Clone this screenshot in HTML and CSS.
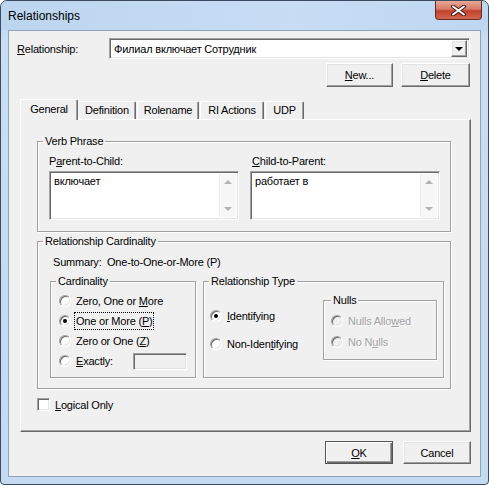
FILE: index.html
```html
<!DOCTYPE html>
<html lang="en">
<head>
    <meta charset="UTF-8">
    <title>Relationships</title>
    <link rel="stylesheet" href="styles.css">
</head>
<body>

<div class="window">
    <!-- Title bar -->
    <div class="titlebar">
        <span class="title">Relationships</span>
        <div class="close">
            <svg width="17" height="11" viewBox="0 0 17 11">
                <path d="M3 1.5 L14 9.5 M14 1.5 L3 9.5" stroke="#4a1a12" stroke-width="4" stroke-linecap="round"/>
                <path d="M3 1.5 L14 9.5 M14 1.5 L3 9.5" stroke="#fff" stroke-width="2" stroke-linecap="round"/>
            </svg>
        </div>
    </div>

    <div class="client">
        <div class="rel-row">
            <label class="rel-label"><u>R</u>elationship:</label>
            <div class="combo sunken">
                <span class="combo-text">Филиал включает Сотрудник</span>
                <span class="combo-drop raised"><i class="arrow-down"></i></span>
            </div>
        </div>

        <div class="btn-row top-buttons">
            <button class="btn btn-new"><u>N</u>ew...</button>
            <button class="btn btn-delete"><u>D</u>elete</button>
        </div>

        <!-- Tabs -->
        <div class="tabs">
            <div class="tab active">General</div>
            <div class="tab tab-def">Definition</div>
            <div class="tab tab-role">Rolename</div>
            <div class="tab tab-ri">RI Actions</div>
            <div class="tab tab-udp">UDP</div>
        </div>

        <div class="panel">
            <fieldset class="group verb-group">
                <legend>Verb Phrase</legend>
                <div class="verb-cols">
                    <div class="verb-col">
                        <div class="field-label">P<u>a</u>rent-to-Child:</div>
                        <div class="memo sunken">
                            <span class="memo-text">включает</span>
                            <span class="scroll"><i class="s-up"></i><i class="s-down"></i></span>
                        </div>
                    </div>
                    <div class="verb-col">
                        <div class="field-label right-label"><u>C</u>hild-to-Parent:</div>
                        <div class="memo sunken">
                            <span class="memo-text">работает в</span>
                            <span class="scroll"><i class="s-up"></i><i class="s-down"></i></span>
                        </div>
                    </div>
                </div>
            </fieldset>

            <fieldset class="group card-group">
                <legend>Relationship Cardinality</legend>
                <div class="summary">
                    <span class="summary-key">Summary:</span>
                    <span>One-to-One-or-More (P)</span>
                </div>
                <div class="card-cols">
                    <fieldset class="group cardinality">
                        <legend>Cardinality</legend>
                        <div class="radio-row"><span class="radio"></span><span class="radio-label">Zero, One or <u>M</u>ore</span></div>
                        <div class="radio-row"><span class="radio checked"></span><span class="radio-label focus">One or More (<u>P</u>)</span></div>
                        <div class="radio-row"><span class="radio"></span><span class="radio-label">Zero or One (<u>Z</u>)</span></div>
                        <div class="radio-row"><span class="radio"></span><span class="radio-label exact-label"><u>E</u>xactly:</span><span class="exact sunken"></span></div>
                    </fieldset>

                    <fieldset class="group rel-type">
                        <legend>Relationship Type</legend>
                        <div class="type-cols">
                            <div class="type-radios">
                                <div class="radio-row type-row"><span class="radio checked"></span><span class="radio-label"><u>I</u>dentifying</span></div>
                                <div class="radio-row type-row"><span class="radio"></span><span class="radio-label">Non-Iden<u>t</u>ifying</span></div>
                            </div>
                            <fieldset class="group nulls">
                                <legend>Nulls</legend>
                                <div class="radio-row null-row"><span class="radio disabled"></span><span class="radio-label disabled-text">Nulls Allo<u>w</u>ed</span></div>
                                <div class="radio-row null-row"><span class="radio disabled"></span><span class="radio-label disabled-text">No N<u>u</u>lls</span></div>
                            </fieldset>
                        </div>
                    </fieldset>
                </div>
            </fieldset>

            <div class="check-row">
                <span class="checkbox sunken"></span>
                <span class="check-label"><u>L</u>ogical Only</span>
            </div>
        </div>

        <div class="btn-row bottom-buttons">
            <button class="btn btn-ok default"><u>O</u>K</button>
            <button class="btn btn-cancel">Cancel</button>
        </div>
    </div>
</div>

</body>
</html>
```

FILE: styles.css
```css
* {
    box-sizing: border-box;
}
body {
    margin: 0;
    width: 489px;
    height: 485px;
    overflow: hidden;
    font-family: "Liberation Sans", Arial, sans-serif;
    font-size: 11px;
    letter-spacing: -0.2px;
    color: #000;
    background: #fff;
}
u {
    text-decoration: underline;
    text-underline-offset: 1px;
}

/* Window frame */
.window {
    width: 489px;
    height: 485px;
    border: 1px solid #3b4a5e;
    border-radius: 7px 7px 4px 4px;
    background: linear-gradient(to bottom, #bcd5ef 0, #c9ddf3 40px, #c4daf2 100%);
    display: flex;
    flex-direction: column;
}
.titlebar {
    height: 29px;
    display: flex;
    align-items: flex-start;
    justify-content: space-between;
    padding-left: 7px;
    background: linear-gradient(to right, #bcd5ef 0, #c8ddf4 60%, #bed7f1 100%);
    border-radius: 7px 7px 0 0;
}
.title {
    font-size: 12px;
    letter-spacing: 0;
    line-height: 14px;
    margin-top: 8px;
    color: #000;
}
.close {
    width: 47px;
    height: 19px;
    margin-right: 6px;
    border: 1px solid #6b2a20;
    border-top: none;
    border-radius: 0 0 4px 4px;
    background: linear-gradient(to bottom, #e8a898 0, #d67a66 45%, #c0412c 55%, #d2664f 100%);
    display: flex;
    align-items: center;
    justify-content: center;
}

/* Client area */
.client {
    margin: 0 7px 7px 7px;
    height: 447px;
    border: 1px solid #8fa3bb;
    background: #f0f0f0;
    padding: 7px 10px 0 0;
}

.sunken {
    border: 1px solid;
    border-color: #a0a0a0 #fff #fff #a0a0a0;
    box-shadow: inset 1px 1px 0 #696969, inset -1px -1px 0 #e3e3e3;
    background: #fff;
}
.raised {
    border: 1px solid;
    border-color: #fff #696969 #696969 #fff;
    box-shadow: inset -1px -1px 0 #a0a0a0, inset 1px 1px 0 #e3e3e3;
    background: #f0f0f0;
}

.rel-row {
    display: flex;
    align-items: center;
    height: 21px;
}
.rel-label {
    width: 100px;
    padding-left: 8px;
}
.combo {
    width: 361px;
    height: 21px;
    display: flex;
    align-items: center;
    justify-content: space-between;
    padding: 2px;
}
.combo-text {
    padding-left: 2px;
}
.combo-drop {
    width: 16px;
    height: 17px;
    display: flex;
    align-items: center;
    justify-content: center;
}
.arrow-down {
    width: 0;
    height: 0;
    border-left: 4px solid transparent;
    border-right: 4px solid transparent;
    border-top: 4px solid #000;
}

/* Buttons */
.btn-row {
    display: flex;
    justify-content: flex-end;
}
.top-buttons {
    margin-top: 4px;
    gap: 8px;
}
.btn {
    font-family: "Liberation Sans", Arial, sans-serif;
    font-size: 11px;
    letter-spacing: -0.2px;
    color: #000;
    height: 24px;
    padding: 0;
    border: 1px solid;
    border-color: #fff #696969 #696969 #fff;
    box-shadow: inset -1px -1px 0 #a0a0a0, inset 1px 1px 0 #e3e3e3;
    background: #f0f0f0;
}
.btn-new {
    width: 67px;
}
.btn-delete {
    width: 69px;
}
.bottom-buttons {
    margin-top: 9px;
    gap: 10px;
    margin-right: -1px;
}
.btn-ok,
.btn-cancel {
    width: 68px;
    height: 23px;
}
.default {
    border-color: #555;
    box-shadow: inset 1px 1px 0 #fff, inset -1px -1px 0 #696969, inset -2px -2px 0 #a0a0a0;
}

/* Tabs */
.tabs {
    margin-top: 12px;
    margin-left: 11px;
    height: 20px;
    display: flex;
    align-items: flex-end;
    padding-left: 2px;
}
.tab {
    height: 18px;
    line-height: 16px;
    padding: 0;
    text-align: center;
    white-space: nowrap;
    border: 1px solid;
    border-color: #fff #696969 transparent #fff;
    border-bottom: none;
    border-radius: 2px 2px 0 0;
    box-shadow: inset -1px 0 0 #a0a0a0;
    background: #f0f0f0;
    margin-right: 1px;
}
.tab-def { width: 58px; }
.tab-role { width: 62px; }
.tab-ri { width: 64px; }
.tab-udp { width: 39px; }
.active {
    height: 21px;
    width: 58px;
    margin: 0 0 -1px -2px;
    padding-top: 1px;
    position: relative;
    z-index: 1;
}

.panel {
    margin-left: 11px;
    width: 451px;
    height: 313px;
    border: 1px solid;
    border-color: #fff #696969 #696969 #fff;
    box-shadow: inset -1px -1px 0 #a0a0a0;
    padding: 0 0 0 16px;
}

/* Group boxes */
.group {
    margin: 0;
    padding: 0;
    border: 1px solid #a0a0a0;
    box-shadow: inset 1px 1px 0 #fff, 1px 1px 0 #fff;
    min-width: 0;
}
.group legend {
    padding: 0 2px;
    line-height: 13px;
}

.verb-group {
    margin-top: 15px;
    width: 414px;
    padding: 7px 9px 11px 11px;
}
.verb-group > legend {
    margin-left: -6px;
}
.verb-cols {
    display: flex;
    gap: 11px;
}
.verb-col {
    width: 190px;
}
.field-label {
    line-height: 13px;
    margin-bottom: 3px;
}
.right-label {
    padding-left: 2px;
}
.memo {
    height: 49px;
    display: flex;
    justify-content: space-between;
    padding: 2px;
}
.memo-text {
    padding: 1px 0 0 2px;
    line-height: 13px;
}
.scroll {
    width: 17px;
    background: #f7f7f7;
    border-left: 1px solid #ececec;
    display: flex;
    flex-direction: column;
    justify-content: space-between;
    align-items: center;
    padding: 6px 0 6px;
}
.s-up,
.s-down {
    width: 0;
    height: 0;
    border-left: 4px solid transparent;
    border-right: 4px solid transparent;
}
.s-up {
    border-bottom: 4px solid #b4b4b4;
}
.s-down {
    border-top: 4px solid #b4b4b4;
}

.card-group {
    margin-top: 3px;
    width: 414px;
    padding: 8px 6px 10px 12px;
}
.card-group > legend {
    margin-left: -7px;
}
.summary {
    padding-left: 3px;
    line-height: 13px;
    display: flex;
}
.summary-key {
    width: 54px;
}
.card-cols {
    margin-top: 6px;
    display: flex;
    gap: 7px;
}
.cardinality {
    width: 146px;
    padding: 3px 0 6px 8px;
}
.cardinality > legend {
    margin-left: -3px;
}
.radio-row {
    height: 20px;
    display: flex;
    align-items: center;
}
.radio {
    width: 12px;
    height: 12px;
    border-radius: 50%;
    border: 1px solid;
    border-color: #a0a0a0 #fff #fff #a0a0a0;
    box-shadow: inset 1px 1px 0 #696969, inset -1px -1px 0 #e3e3e3;
    background: #fff;
    display: flex;
    align-items: center;
    justify-content: center;
    flex-shrink: 0;
}
.radio.checked::after {
    content: "";
    width: 4px;
    height: 4px;
    border-radius: 50%;
    background: #000;
}
.radio.disabled {
    background: #f0f0f0;
}
.radio-label {
    margin-left: 5px;
    line-height: 14px;
}
.focus {
    outline: 1px dotted #000;
    outline-offset: 1px;
}
.exact-label {
    width: 57px;
}
.exact {
    width: 54px;
    height: 17px;
    background: #f0f0f0;
}

.rel-type {
    width: 241px;
    padding: 0 6px 6px 6px;
}
.rel-type > legend {
    margin-left: -1px;
}
.type-cols {
    display: flex;
    justify-content: space-between;
}
.type-radios {
    padding-top: 18px;
    display: flex;
    flex-direction: column;
    gap: 8px;
}
.nulls {
    margin-top: 6px;
    width: 114px;
    height: 66px;
    padding: 3px 0 0 7px;
}
.nulls > legend {
    margin-left: 0;
}
.null-row {
    height: 21px;
}
.disabled-text {
    color: #a0a0a0;
    text-shadow: 1px 1px 0 #fff;
}

.check-row {
    margin-top: 9px;
    display: flex;
    align-items: center;
    height: 13px;
}
.checkbox {
    width: 13px;
    height: 13px;
}
.check-label {
    margin-left: 5px;
}
```
